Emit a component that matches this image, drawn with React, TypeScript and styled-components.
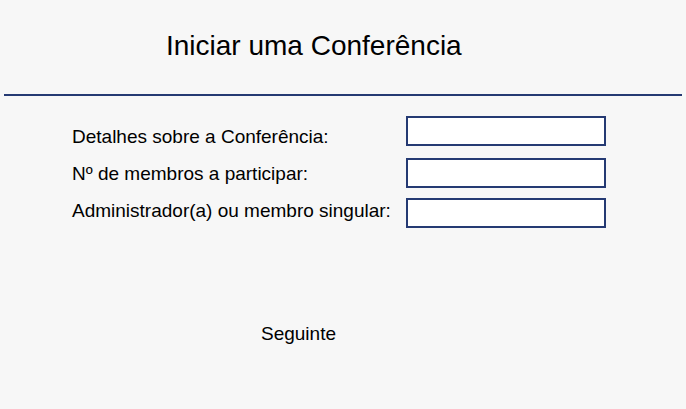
import React from "react";
import styled, { createGlobalStyle } from "styled-components";

const Global = createGlobalStyle`
  html, body { margin: 0; padding: 0; background: #f7f7f7; }
  body { font-family: "Liberation Sans", Arial, sans-serif; color: #000; }
`;

const Page = styled.div`
  width: 686px;
  height: 409px;
  background: #f7f7f7;
  box-sizing: border-box;
  padding: 0 4px;
  display: flex;
  flex-direction: column;
`;

const Title = styled.h1`
  margin: 0;
  padding: 30px 0 0 162px;
  height: 94px;
  box-sizing: border-box;
  font-size: 28px;
  font-weight: normal;
  line-height: 32px;
`;

const Divider = styled.hr`
  margin: 0;
  border: none;
  height: 2px;
  background: #253a73;
`;

const Form = styled.div`
  display: flex;
  padding-left: 68px;
`;

const LabelColumn = styled.div`
  width: 334px;
  padding-top: 22px;
  display: flex;
  flex-direction: column;
`;

const FieldColumn = styled.div`
  display: flex;
  flex-direction: column;
  padding-top: 20px;
`;

const Label = styled.label`
  font-size: 19px;
  line-height: 37px;
  white-space: nowrap;
`;

const Input = styled.input<{ $mt?: number }>`
  box-sizing: border-box;
  width: 200px;
  height: 30px;
  margin: ${(p) => p.$mt ?? 0}px 0 0 0;
  border: 2px solid #253a73;
  background: #fff;
  padding: 0 4px;
  outline: none;
`;

const Footer = styled.div`
  padding: 94px 0 0 257px;
`;

const NextButton = styled.button`
  background: none;
  border: none;
  padding: 0;
  font-family: "Liberation Sans", Arial, sans-serif;
  font-size: 19px;
  line-height: 22px;
  color: #000;
  cursor: pointer;
`;

export default function App() {
  return (
    <>
      <Global />
      <Page>
        <Title>Iniciar uma Conferência</Title>
        <Divider />
        <Form>
          <LabelColumn>
            <Label>Detalhes sobre a Conferência:</Label>
            <Label>Nº de membros a participar:</Label>
            <Label>Administrador(a) ou membro singular:</Label>
          </LabelColumn>
          <FieldColumn>
            <Input aria-label="Detalhes sobre a Conferência" />
            <Input aria-label="Nº de membros a participar" $mt={12} />
            <Input aria-label="Administrador(a) ou membro singular" $mt={10} />
          </FieldColumn>
        </Form>
        <Footer>
          <NextButton>Seguinte</NextButton>
        </Footer>
      </Page>
    </>
  );
}
